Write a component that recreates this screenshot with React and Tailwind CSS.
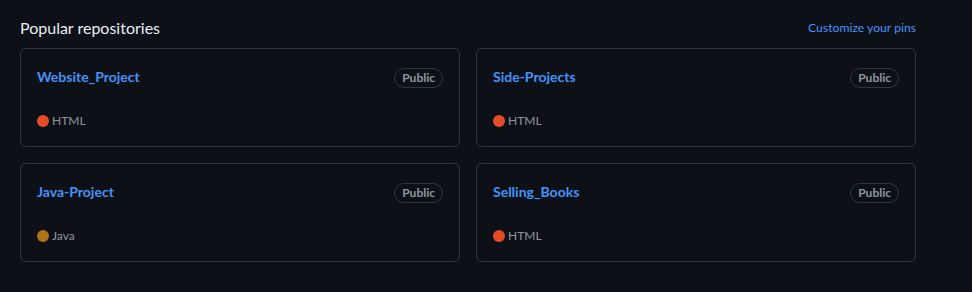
import React from "react";

const repos = [
  { name: "Website_Project", lang: "HTML", color: "bg-[#e34c26]" },
  { name: "Side-Projects", lang: "HTML", color: "bg-[#e34c26]" },
  { name: "Java-Project", lang: "Java", color: "bg-[#b07219]" },
  { name: "Selling_Books", lang: "HTML", color: "bg-[#e34c26]" },
];

export default function App() {
  return (
    <div
      className="min-h-[292px] w-[972px] bg-[#0d1117] pl-5 pt-4"
      style={{ fontFamily: 'Lato, "Noto Sans", sans-serif' }}
    >
      <div className="w-[896px]">
        <div className="mb-2 flex h-6 items-center justify-between">
          <h2 className="text-[16px] font-normal text-[#e6edf3]">Popular repositories</h2>
          <a className="text-[12.2px] text-[#4493f8]">Customize your pins</a>
        </div>
        <div className="grid grid-cols-2 gap-4">
          {repos.map((r) => (
            <div
              key={r.name}
              className="flex h-[99px] flex-col justify-between rounded-md border border-[#30363d] p-4"
            >
              <div className="flex h-6 items-center justify-between">
                <span className="mb-[2px] text-[14px] font-bold text-[#4493f8]">{r.name}</span>
                <span className="mt-[2px] flex h-5 items-center rounded-full border border-[#30363d] px-[7px] text-[12px] font-bold text-[#8d96a0]">
                  Public
                </span>
              </div>
              <div className="mb-px flex h-4 items-center gap-[3px] text-[12px] text-[#8d96a0]">
                <span className={`inline-block h-3 w-3 rounded-full ${r.color}`}></span>
                <span>{r.lang}</span>
              </div>
            </div>
          ))}
        </div>
      </div>
    </div>
  );
}
